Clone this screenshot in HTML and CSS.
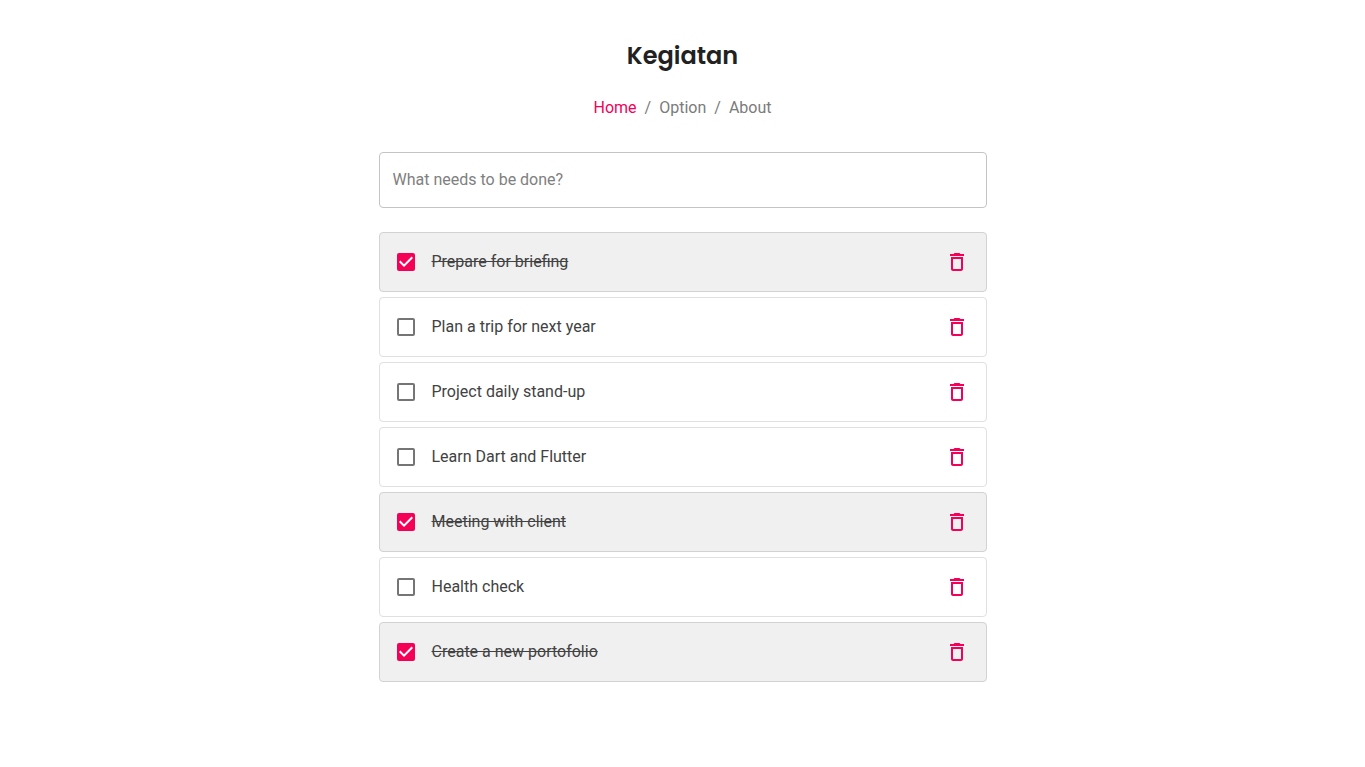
FILE: index.html
```html
<!DOCTYPE html>
<html lang="id">
<head>
    <meta charset="UTF-8">
    <meta name="viewport" content="width=device-width, initial-scale=1.0">
    <title>Kegiatan</title>
    <link rel="stylesheet" href="styles.css">
</head>
<body>

    <!-- Trash icon, used by every row -->
    <svg class="sprite" aria-hidden="true">
        <symbol id="trash" viewBox="0 0 24 24">
            <path d="M6 19c0 1.1.9 2 2 2h8c1.1 0 2-.9 2-2V7H6v12zM8 9h8v10H8V9zm7.5-5l-1-1h-5l-1 1H5v2h14V4h-3.5z"/>
        </symbol>
    </svg>

    <main class="container">
        <h1>Kegiatan</h1>

        <nav class="breadcrumbs" aria-label="breadcrumb">
            <a href="#home" class="active">Home</a>
            <span>/</span>
            <a href="#option">Option</a>
            <span>/</span>
            <a href="#about">About</a>
        </nav>

        <input type="text" class="new-todo" placeholder="What needs to be done?" aria-label="What needs to be done?">

        <ul class="todo-list">
            <li class="todo done">
                <input type="checkbox" id="todo1" checked>
                <label for="todo1">Prepare for briefing</label>
                <button type="button" aria-label="Delete"><svg><use href="#trash"/></svg></button>
            </li>
            <li class="todo">
                <input type="checkbox" id="todo2">
                <label for="todo2">Plan a trip for next year</label>
                <button type="button" aria-label="Delete"><svg><use href="#trash"/></svg></button>
            </li>
            <li class="todo">
                <input type="checkbox" id="todo3">
                <label for="todo3">Project daily stand-up</label>
                <button type="button" aria-label="Delete"><svg><use href="#trash"/></svg></button>
            </li>
            <li class="todo">
                <input type="checkbox" id="todo4">
                <label for="todo4">Learn Dart and Flutter</label>
                <button type="button" aria-label="Delete"><svg><use href="#trash"/></svg></button>
            </li>
            <li class="todo done">
                <input type="checkbox" id="todo5" checked>
                <label for="todo5">Meeting with client</label>
                <button type="button" aria-label="Delete"><svg><use href="#trash"/></svg></button>
            </li>
            <li class="todo">
                <input type="checkbox" id="todo6">
                <label for="todo6">Health check</label>
                <button type="button" aria-label="Delete"><svg><use href="#trash"/></svg></button>
            </li>
            <li class="todo done">
                <input type="checkbox" id="todo7" checked>
                <label for="todo7">Create a new portofolio</label>
                <button type="button" aria-label="Delete"><svg><use href="#trash"/></svg></button>
            </li>
        </ul>
    </main>

    <script>
        document.querySelectorAll(".todo").forEach((todo) => {
            todo.querySelector("input").addEventListener("change", (e) => {
                todo.classList.toggle("done", e.target.checked);
            });
            todo.querySelector("button").addEventListener("click", () => todo.remove());
        });
    </script>

</body>
</html>
```
FILE: styles.css
```css
* {
    box-sizing: border-box;
}

body {
    margin: 0;
    font-family: Roboto, sans-serif;
    font-size: 16px;
    line-height: 24px;
    color: #424242;
    background-color: #ffffff;
}

.sprite {
    display: none;
}

.container {
    max-width: 640px;
    margin: 0 auto;
    padding: 36px 16px;
}

h1 {
    margin: 0 0 20px;
    font-family: Poppins, Inter, sans-serif;
    font-size: 24px;
    font-weight: 600;
    line-height: 40px;
    text-align: center;
    color: #212121;
}

.breadcrumbs {
    display: flex;
    justify-content: center;
    gap: 8px;
    margin-bottom: 32px;
    color: #7b7b7b;
}

.breadcrumbs a {
    color: #7b7b7b;
    text-decoration: none;
}

.breadcrumbs .active {
    color: #f50057;
}

.new-todo {
    display: block;
    width: 100%;
    height: 56px;
    padding: 0 13px 2px;
    border: 1px solid #c4c4c4;
    border-radius: 4px;
    font: inherit;
    color: #212121;
}

.new-todo::placeholder {
    color: #808080;
    opacity: 1;
}

.todo-list {
    display: flex;
    flex-direction: column;
    gap: 5px;
    margin: 24px 0 0;
    padding: 0;
    list-style: none;
}

.todo {
    display: flex;
    align-items: center;
    height: 60px;
    padding: 0 17px;
    border: 1px solid #e0e0e0;
    border-radius: 4px;
}

.todo.done {
    background-color: #f0f0f0;
    border-color: #d2d2d2;
}

.todo input {
    appearance: none;
    flex: none;
    width: 18px;
    height: 18px;
    margin: 0;
    border: 2px solid #757575;
    border-radius: 2px;
    cursor: pointer;
}

.todo input:checked {
    border: none;
    /* white tick on pink */
    background: #f50057 url("data:image/svg+xml,%3Csvg xmlns='http://www.w3.org/2000/svg' viewBox='3 3 18 18'%3E%3Cpath fill='%23fff' d='M10 17l-5-5 1.41-1.41L10 14.17l7.59-7.59L19 8l-9 9z'/%3E%3C/svg%3E") center / 18px no-repeat;
}

.todo label {
    flex: 1;
    padding: 0 17px;
    cursor: pointer;
}

.todo.done label {
    text-decoration: line-through;
}

.todo button {
    display: flex;
    padding: 0;
    border: none;
    background: none;
    cursor: pointer;
}

.todo svg {
    width: 24px;
    height: 24px;
    fill: #f50057;
}
```
